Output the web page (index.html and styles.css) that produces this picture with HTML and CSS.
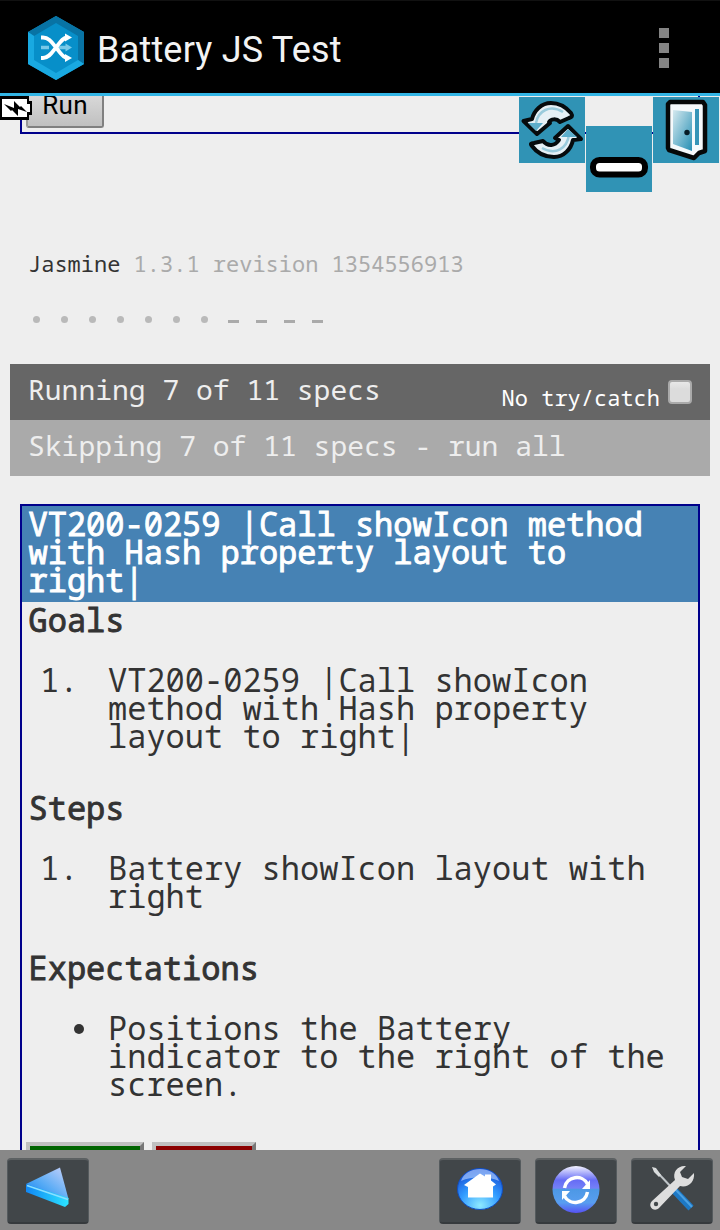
FILE: index.html
```html
<!DOCTYPE html>
<html lang="en">
<head>
<meta charset="utf-8">
<title>Battery JS Test</title>
<link rel="stylesheet" href="styles.css">
</head>
<body>
<div class="screen">
  <header class="appbar">
    <svg class="logo" viewBox="0 0 56 64" width="56" height="64">
      <path fill="#078fc9" d="M28 0 56 16v32L28 64 0 48V16z"/>
      <path fill="#0873a4" d="M28 0 56 16v32l-6-4V20L28 7 6 20l-6-4z"/>
      <path fill="#19a9e1" d="M0 16l6 4v24l22 13 22-13 6 4-28 16L0 48z"/>
      <path fill="none" stroke="#79c9e8" stroke-width="3.600" d="M13 31.500h8M28 31.500h10"/>
      <path fill="#79c9e8" d="M37.500 27.500 44 31.500l-6.500 4z"/>
      <path d="M13 21.500h2c6 0 9 5 13 10s7 10.500 11 10.500M13 42h2c6 0 9-5.500 13-10.500s7-10 11-10" fill="none" stroke="#fff" stroke-width="3.800"/>
      <path fill="#fff" d="M37 17.500 44 21.500l-7 4zM37 38l7 4-7 4z"/>
    </svg>
    <h1 class="app-title">Battery JS Test</h1>
    <div class="overflow"><i></i><i></i><i></i></div>
  </header>

  <main class="web">
    <section class="run-panel"><button class="run">Run</button></section>

    <div class="banner">Jasmine <span class="version">1.3.1 revision 1354556913</span></div>
    <ul class="symbols">
      <li class="dot"></li><li class="dot"></li><li class="dot"></li><li class="dot"></li><li class="dot"></li><li class="dot"></li><li class="dot"></li><li class="dash"></li><li class="dash"></li><li class="dash"></li><li class="dash"></li>
    </ul>

    <div class="alert running"><span>Running 7 of 11 specs</span><label class="exceptions">No try/catch<span class="check"></span></label></div>
    <div class="alert skipping">Skipping 7 of 11 specs - run all</div>

    <section class="spec">
      <h2 class="spec-title">VT200-0259 |Call showIcon method<br>with Hash property layout to<br>right|</h2>
      <h3 class="head">Goals</h3>
      <div class="item"><span class="num">1.</span><p>VT200-0259 |Call showIcon<br>method with Hash property<br>layout to right|</p></div>
      <h3 class="head">Steps</h3>
      <div class="item"><span class="num">1.</span><p>Battery showIcon layout with<br>right</p></div>
      <h3 class="head">Expectations</h3>
      <div class="item"><span class="bullet"></span><p>Positions the Battery<br>indicator to the right of the<br>screen.</p></div>
      <div class="verdict"><span class="pass"></span><span class="fail"></span></div>
    </section>

    <svg class="battery" viewBox="0 0 32 24" width="32" height="24">
      <path fill="#000" d="M0 0h29v5h3v14h-3v5H0z"/>
      <path fill="#fff" d="M2 3h25v5h3v8h-3v5H2z"/>
      <path fill="#000" d="M4 8l10 4V5l6 6 1-1 6 6-9-3v7l-6-6-1 1z"/>
    </svg>
    <div class="tools">
      <svg viewBox="0 0 66 66" width="66" height="66">
        <defs>
          <linearGradient id="door" x1="0" y1="0" x2="1" y2="1"><stop offset="0" stop-color="#d5e9ef"/><stop offset="1" stop-color="#268fb4"/></linearGradient>
        </defs>
        <g stroke="#060b0d" stroke-width="4" stroke-linejoin="round" fill="#e6f0f5">
          <path d="M4.500 24 13 22C15 14 22 6 32 6c8 0 14 3 20 10 2 3 1 4-2 5l-9 4c-4-4-9-3-11 0l1 1-13 11z"/>
          <path d="M49 29 62 42l-8 1c-2 9-9 17-19 17-9 0-17-4-22-11-2-2-1-3 2-3l9-2c5 6 12 5 16-1l-4-2z"/>
        </g>
        <path d="M17 26c2-12 14-19 27-11M50 38c-2 13-13 21-27 13" fill="none" stroke="#9acbdc" stroke-width="2.500"/>
        <path d="M9 26h15l-7 8zM42 40l7-8 9 8z" fill="#5dadca"/>
      </svg>
      <svg class="low" viewBox="0 0 66 66" width="66" height="66">
        <rect x="7" y="34" width="52" height="14.500" rx="6.500" fill="#fff" stroke="#000" stroke-width="6"/>
      </svg>
      <svg viewBox="0 0 66 66" width="66" height="66">
        <path fill="#f5f9fb" stroke="#050808" stroke-width="4.500" stroke-linejoin="round" d="M17 5h33l2 3v46l-6 2-5 5-25-8-1-2V7z"/>
        <path fill="url(#door)" d="M20 13l19 2v39L20 47z"/>
        <path fill="#3594b7" d="M42 12h4v36h-4z"/>
        <circle cx="34" cy="35.500" r="2.700" fill="#071b25"/>
      </svg>
    </div>
  </main>

  <footer class="toolbar">
    <span class="key"><svg viewBox="0 0 80 66" width="80" height="66">
      <defs><linearGradient id="tri" x1="0" y1="1" x2="1" y2="0"><stop offset="0" stop-color="#087cf0"/><stop offset=".45" stop-color="#55aaf5"/><stop offset="1" stop-color="#cbd3fa"/></linearGradient>
      <linearGradient id="edge"><stop offset="0" stop-color="#1287f5"/><stop offset="1" stop-color="#2be4ff"/></linearGradient></defs>
      <path fill="url(#tri)" d="M18 26 52 9.500 60.500 41 57 43z"/>
      <path fill="url(#edge)" d="M18 26l42.500 14v6L57 49 18 34z"/>
      <path stroke="#8bdfff" stroke-width="1.500" fill="none" d="M19 27.500l41 14"/></svg></span>
    <span class="spacer"></span>
    <span class="key"><svg viewBox="0 0 80 66" width="80" height="66">
      <defs><radialGradient id="home" cy=".9" r=".9"><stop offset="0" stop-color="#8eeaff"/><stop offset=".5" stop-color="#319aff"/><stop offset="1" stop-color="#1748d0"/></radialGradient></defs>
      <ellipse cx="40" cy="31" rx="22.500" ry="20.500" fill="url(#home)" stroke="#104fc4"/>
      <path fill="#b0d0ff" opacity=".65" d="M21 23c5-16 33-16 38 0-11-5-27-5-38 0z"/>
      <path fill="#fff" d="M24 27 40 15.500l5 3v-2h6v6l5 4-3 2v11H28V29z"/></svg></span>
    <span class="key"><svg viewBox="0 0 80 66" width="80" height="66">
      <defs><linearGradient id="sync" x2="0" y2="1"><stop offset="0" stop-color="#f2f2ff"/><stop offset=".3" stop-color="#666cf5"/><stop offset=".47" stop-color="#7480f7"/><stop offset=".5" stop-color="#4d98e5"/><stop offset=".78" stop-color="#589ef0"/><stop offset="1" stop-color="#5751f5"/></linearGradient></defs>
      <circle cx="40" cy="31.500" r="23.500" fill="url(#sync)"/>
      <path fill="none" stroke="#fff" stroke-width="3.500" d="M28.500 30c2-12 18-14 23-4M51.500 34c-2 12-18 14-23 4"/>
      <path fill="#fff" d="M54 22v9h-8zM26 42v-9h8z"/></svg></span>
    <span class="key"><svg viewBox="0 0 80 66" width="80" height="66">
      <path stroke="#bfc5c8" stroke-width="2" d="M25 14l17 18"/>
      <path fill="#d9dcdd" d="M20 9l4 1 5 7-2 2-5-5z"/>
      <path stroke="#1d78c4" stroke-width="7" d="M41 31l18 19"/><path stroke="#4aa0e3" stroke-width="2" d="M43 31l17 18"/>
      <path fill="#dedede" d="M54 8c-8-1-14 6-11 14L20 43c-5 5 2 12 7 7l21-22c8 2 15-4 14-13l-6 6-6-2-2-5z"/>
      <circle cx="24" cy="46" r="2.200" fill="#444a4d"/></svg></span>
  </footer>
</div>
</body>
</html>
```
FILE: styles.css
```css
* { box-sizing: border-box; }
body { margin: 0; background: #eee; }
h1, h2, h3, p, ul { margin: 0; padding: 0; font: inherit; }
svg { display: block; }

.screen {
  width: 720px;
  height: 1230px;
  display: flex;
  flex-direction: column;
  overflow: hidden;
  font-family: "Droid Sans Mono", "Noto Sans Mono", "DejaVu Sans Mono", monospace;
  color: #333;
}

.appbar {
  height: 96px;
  flex: none;
  display: flex;
  align-items: center;
  padding: 1px 51px 0 28px;
  background: #000;
  border-top: 1px solid #111;
  border-bottom: 3px solid #33b5e5;
}
.app-title {
  flex: 1;
  margin: 4px 0 0 13px;
  font: 36px/44px Roboto, sans-serif;
  letter-spacing: .2px;
  color: #f3f3f3;
}
.overflow { display: flex; flex-direction: column; gap: 5px; }
.overflow i { width: 10px; height: 10px; background: #848484; }

.web { position: relative; height: 1054px; flex: none; overflow: hidden; }
.run-panel {
  height: 38px;
  margin: 0 20px;
  padding-left: 4px;
  border: solid #00008b;
  border-width: 0 2px 2px;
}
.run {
  display: block;
  width: 78px;
  height: 32px;
  padding: 0 0 13px;
  border: solid #808080;
  border-width: 0 2px 2px;
  border-left-color: #999;
  border-radius: 0 0 3px 3px;
  background: linear-gradient(#d8d8d8, #c0c0c0);
  font: 26px/18px Roboto, sans-serif;
  letter-spacing: .3px;
  color: #000;
}
.banner {
  margin: 115px 0 0 28px;
  font-size: 22px;
  line-height: 28px;
}
.version { color: #aaa; }
.symbols { display: flex; height: 87px; padding: 39px 0 0 33px; list-style: none; }
.symbols li { width: 28px; }
.symbols li::before { content: ""; display: block; }
.dot::before { width: 7px; height: 7px; border-radius: 50%; background: #b9b9b9; }
.dash::before { width: 11px; height: 3px; margin: 4px 0 0 -1px; background: #aaa; }

.alert {
  height: 56px;
  margin: 0 10px;
  padding: 0 18px;
  font-size: 28px;
  line-height: 50px;
  color: #eee;
}
.running { display: flex; justify-content: space-between; background: #666; }
.skipping { background: #aaa; }
.exceptions { display: flex; gap: 8px; font-size: 22px; line-height: 67px; color: #fff; }
.check {
  width: 24px;
  height: 24px;
  margin-top: 16px;
  border: 2px solid #aaa;
  border-radius: 4px;
  background: linear-gradient(#e8e8e8, #dcdcdc 35%);
}

.spec {
  height: 700px;
  margin: 28px 20px 0;
  border: 2px solid #00008b;
  font-size: 32px;
  line-height: 28px;
  white-space: nowrap;
}
.spec-title {
  padding: 4px 6px 8px 6.500px;
  background: #4682b4;
  color: #fff;
  -webkit-text-stroke: .9px #fff;
}
.head { margin: 4px 0 32px 6.500px; -webkit-text-stroke: .9px #333; }
.item { display: flex; }
.item + .head { margin-top: 44px; }
.num { width: 86px; padding-left: 18px; }
.bullet::before {
  content: "";
  display: block;
  width: 10px;
  height: 10px;
  margin: 10px 24px 0 52px;
  border-radius: 50%;
  background: #333;
}
.verdict { display: flex; gap: 8px; margin: 44px 0 0 4px; }
.verdict span {
  height: 60px;
  border: 4px solid #c0c0c0;
  border-right-color: #777;
}
.pass { width: 118px; background: #006400; }
.fail { width: 104px; background: #8b0000; }

.battery { position: absolute; left: 0; top: 0; }
.tools { position: absolute; right: 1px; top: 1px; display: flex; gap: 1px; }
.tools svg { background: #3093b5; }
.tools .low { margin-top: 29px; }

.toolbar {
  flex: 1;
  display: flex;
  gap: 14px;
  padding: 8px 7px 0;
  background: #888;
}
.spacer { flex: 1; }
.key {
  width: 82px;
  height: 66px;
  border: 1px solid #555b5e;
  border-top: 2px solid #5c6062;
  border-bottom: 2px solid #363a3d;
  border-radius: 4px;
  background: #414649;
}
.key svg { margin-top: -2px; }
```
